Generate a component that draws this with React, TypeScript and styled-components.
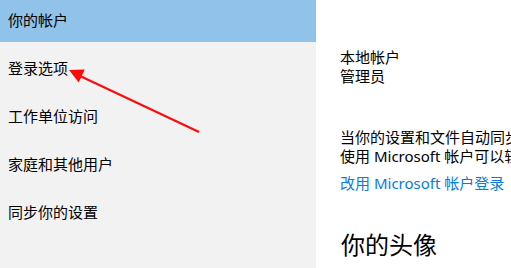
import React from "react";
import styled, { createGlobalStyle } from "styled-components";

const GlobalStyle = createGlobalStyle`
    html, body {
        margin: 0;
        padding: 0;
        width: 511px;
        height: 268px;
        overflow: hidden;
        background: #ffffff;
    }
    body {
        font-family: "Noto Sans", "Noto Sans CJK SC", sans-serif;
        color: #000000;
    }
`;

const Page = styled.div`
    position: relative;
    display: flex;
    flex-direction: row;
    width: 511px;
    height: 268px;
    overflow: hidden;
`;

const Sidebar = styled.nav`
    display: flex;
    flex-direction: column;
    width: 316px;
    flex-shrink: 0;
    height: 100%;
    background: #f2f2f2;
`;

const NavItem = styled.div<{ $active?: boolean }>`
    display: flex;
    align-items: center;
    height: ${(p) => (p.$active ? "42px" : "48px")};
    padding: ${(p) => (p.$active ? "0 0 3px 8px" : "3px 0 0 8px")};
    box-sizing: border-box;
    background: ${(p) => (p.$active ? "#91c2e9" : "transparent")};
    font-family: "Noto Sans CJK SC", sans-serif;
    font-size: 15px;
    color: #000000;
    white-space: nowrap;
`;

const Content = styled.main`
    display: flex;
    flex-direction: column;
    padding: 48px 0 0 24px;
    min-width: 0;
    overflow: hidden;
`;

const Line = styled.div`
    font-family: "Noto Sans", "Noto Sans CJK SC", sans-serif;
    font-size: 15px;
    line-height: 19px;
    white-space: nowrap;
`;

const Block = styled.div<{ $gap: number }>`
    display: flex;
    flex-direction: column;
    margin-top: ${(p) => p.$gap}px;
`;

const Link = styled.a`
    margin-top: 8px;
    font-family: "Noto Sans", "Noto Sans CJK SC", sans-serif;
    font-size: 15px;
    line-height: 19px;
    color: #0a7bd6;
    text-decoration: none;
    white-space: nowrap;
`;

const Heading = styled.h2`
    margin: 36px 0 0 1px;
    font-family: "Noto Sans CJK SC", sans-serif;
    font-weight: 400;
    font-size: 24px;
    line-height: 30px;
    white-space: nowrap;
`;

const Overlay = styled.svg`
    position: absolute;
    left: 0;
    top: 0;
    pointer-events: none;
`;

const menu = ["登录选项", "工作单位访问", "家庭和其他用户", "同步你的设置"];

function App() {
    return (
        <>
            <GlobalStyle />
            <Page>
                <Sidebar>
                    <NavItem $active>你的帐户</NavItem>
                    {menu.map((m) => (
                        <NavItem key={m}>{m}</NavItem>
                    ))}
                </Sidebar>
                <Content>
                    <Block $gap={0}>
                        <Line>本地帐户</Line>
                        <Line>管理员</Line>
                    </Block>
                    <Block $gap={42}>
                        <Line>当你的设置和文件自动同步时，Windows 会工作得更好。</Line>
                        <Line>使用 Microsoft 帐户可以轻松地在所有设备上获取你的所有内容。</Line>
                    </Block>
                    <Link href="#">改用 Microsoft 帐户登录</Link>
                    <Heading>你的头像</Heading>
                </Content>
                <Overlay width="511" height="268" viewBox="0 0 511 268">
                    <line x1="199" y1="132" x2="80" y2="76" stroke="#ff0a0a" strokeWidth="2" />
                    <polygon points="69,70 78.7,82.5 84.7,69.5" fill="#ff0a0a" />
                </Overlay>
            </Page>
        </>
    );
}

export default App;
